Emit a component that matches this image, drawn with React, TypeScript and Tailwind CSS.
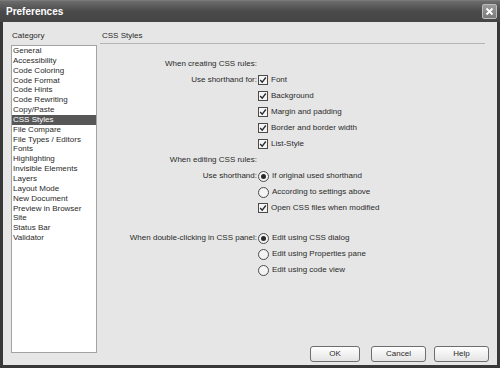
import React from "react";

const categories = [
  "General",
  "Accessibility",
  "Code Coloring",
  "Code Format",
  "Code Hints",
  "Code Rewriting",
  "Copy/Paste",
  "CSS Styles",
  "File Compare",
  "File Types / Editors",
  "Fonts",
  "Highlighting",
  "Invisible Elements",
  "Layers",
  "Layout Mode",
  "New Document",
  "Preview in Browser",
  "Site",
  "Status Bar",
  "Validator",
];

function Check() {
  return (
    <span className="w-[10px] h-[10px] border border-[#4a4a4a] bg-[#f4f4f4] flex items-center justify-center shrink-0">
      <svg width="8" height="8" viewBox="0 0 8 8">
        <polyline points="1.2,4 3.2,6.2 6.8,1.5" fill="none" stroke="#2a2a2a" strokeWidth="1.3" />
      </svg>
    </span>
  );
}

function Radio({ on }: { on?: boolean }) {
  return (
    <span className="w-[11px] h-[11px] rounded-full border border-[#4a4a4a] bg-[#f4f4f4] flex items-center justify-center shrink-0">
      {on && <span className="w-[5px] h-[5px] rounded-full bg-[#2a2a2a]" />}
    </span>
  );
}

function Row({ label, control, text }: { label?: string; control?: React.ReactNode; text?: string }) {
  return (
    <div className="flex h-[16px] items-center">
      <div className="w-[157px] text-right">{label}</div>
      {control && (
        <div className="flex items-center gap-[3px] ml-[1px]">
          {control}
          <span>{text}</span>
        </div>
      )}
    </div>
  );
}

function Btn({ children, w }: { children: React.ReactNode; w: string }) {
  return (
    <div
      className={`${w} h-[16px] rounded-[3px] border border-[#6e6e6e] bg-gradient-to-b from-[#ffffff] to-[#e4e4e4] flex items-center justify-center`}
    >
      {children}
    </div>
  );
}

export default function App() {
  return (
    <div className="w-[500px] h-[368px] bg-[#383838] flex flex-col px-[3px] pb-[3px] font-['Liberation_Sans',Arial,sans-serif] text-[8px] text-[#2a2a2a]">
      {/* Title bar */}
      <div className="h-[22px] -mx-[3px] flex items-center justify-between pl-[6px] pr-[3px] bg-gradient-to-b from-[#6c6c6c] via-[#4a4a4a] to-[#454545] border-t border-[#7a7a7a]">
        <span className="text-white font-bold text-[10px]">Preferences</span>
        <span className="w-[15px] h-[15px] rounded-[2px] border border-[#bdbdbd] bg-gradient-to-b from-[#9a9a9a] to-[#7a7a7a] flex items-center justify-center">
          <svg width="9" height="9" viewBox="0 0 9 9">
            <path d="M1.5 1.5 L7.5 7.5 M7.5 1.5 L1.5 7.5" stroke="#fff" strokeWidth="1.8" />
          </svg>
        </span>
      </div>

      {/* Body */}
      <div className="flex-1 bg-[#e6e6e6] flex pt-[8px] pl-[8px] pb-[3px] pr-[8px]">
        {/* Category column */}
        <div className="w-[86px] flex flex-col">
          <div className="h-[15px] leading-[12px] pl-[1px]">Category</div>
          <div className="h-[308px] bg-white border border-[#a3a3a3] flex flex-col">
            {categories.map((c) => (
              <div
                key={c}
                className={
                  c === "CSS Styles"
                    ? "h-[9.85px] leading-[9.85px] pl-[1px] bg-[#575757] text-white"
                    : "h-[9.85px] leading-[9.85px] pl-[1px]"
                }
              >
                {c}
              </div>
            ))}
          </div>
        </div>

        {/* Settings column */}
        <div className="flex-1 ml-[3px] flex flex-col">
          <div className="mr-[4px] h-[14px] leading-[12px] pl-[2px] border-b border-[#b4b4b4]">CSS Styles</div>
          <div className="mt-[12px] flex flex-col">
            <Row label="When creating CSS rules:" />
            <Row label="Use shorthand for:" control={<Check />} text="Font" />
            <Row control={<Check />} text="Background" />
            <Row control={<Check />} text="Margin and padding" />
            <Row control={<Check />} text="Border and border width" />
            <Row control={<Check />} text="List-Style" />
            <Row label="When editing CSS rules:" />
            <Row label="Use shorthand:" control={<Radio on />} text="If original used shorthand" />
            <Row control={<Radio />} text="According to settings above" />
            <Row control={<Check />} text="Open CSS files when modified" />
            <div className="h-[14px]" />
            <Row label="When double-clicking in CSS panel:" control={<Radio on />} text="Edit using CSS dialog" />
            <Row control={<Radio />} text="Edit using Properties pane" />
            <Row control={<Radio />} text="Edit using code view" />
          </div>
          <div className="mt-auto flex justify-end gap-[11px]">
            <Btn w="w-[50px]">OK</Btn>
            <div className="flex gap-[8px]">
              <Btn w="w-[55px]">Cancel</Btn>
              <Btn w="w-[55px]">Help</Btn>
            </div>
          </div>
        </div>
      </div>
    </div>
  );
}
